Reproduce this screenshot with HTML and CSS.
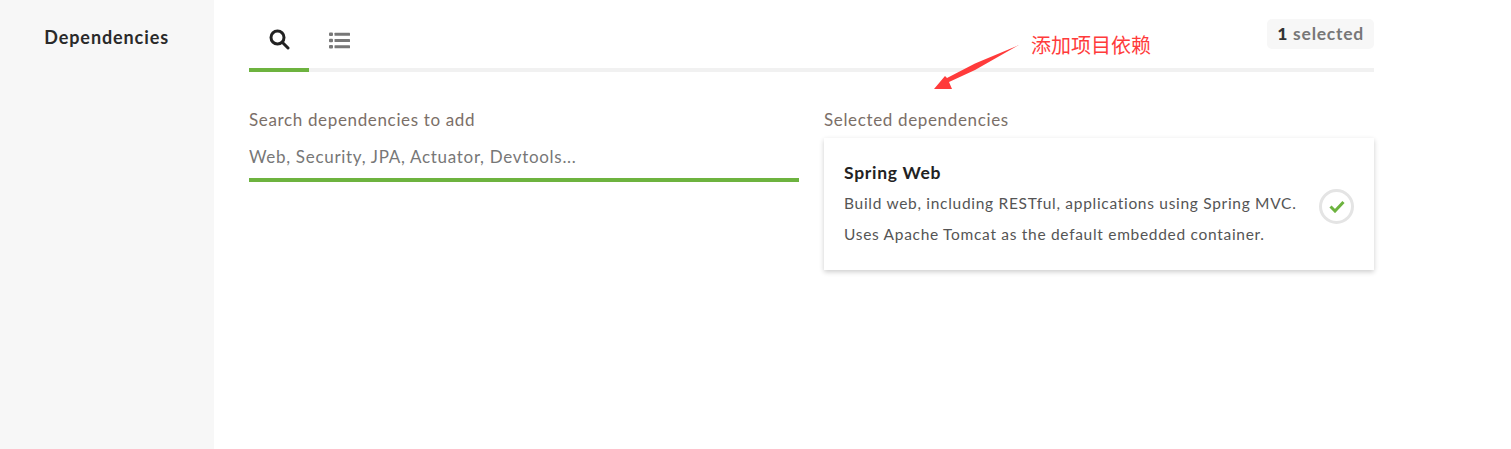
FILE: index.html
```html
<!DOCTYPE html>
<html lang="en">
<head>
  <meta charset="UTF-8">
  <title>Dependencies</title>
  <link rel="stylesheet" href="styles.css">
</head>
<body>
  <div class="page">
    <aside class="sidebar">
      <h2>Dependencies</h2>
    </aside>

    <main class="content">
      <!-- Tabs -->
      <div class="tabs">
        <div class="tab tab-active">
          <svg width="21" height="21" viewBox="0 0 21 21" fill="none" stroke="#222" stroke-width="3">
            <circle cx="8.5" cy="8.5" r="6.5"/>
            <path d="M13.5 13.5 L19 19" stroke-linecap="round"/>
          </svg>
        </div>
        <div class="tab tab-list">
          <svg width="21" height="17" viewBox="0 0 21 17" fill="#777">
            <rect x="0" y="0.5" width="4" height="3.5" rx="1"/>
            <rect x="0" y="6.7" width="4" height="3.5" rx="1"/>
            <rect x="0" y="13" width="4" height="3.5" rx="1"/>
            <rect x="5.5" y="0.7" width="15.5" height="3" rx="0.5"/>
            <rect x="5.5" y="7" width="15.5" height="3" rx="0.5"/>
            <rect x="5.5" y="13.2" width="15.5" height="3" rx="0.5"/>
          </svg>
        </div>
        <div class="selected-count"><strong>1</strong> selected</div>
      </div>

      <div class="columns">
        <!-- Search -->
        <section class="column">
          <label class="column-title">Search dependencies to add</label>
          <input class="search-input" type="text" placeholder="Web, Security, JPA, Actuator, Devtools...">
        </section>

        <!-- Selected -->
        <section class="column">
          <div class="column-title">Selected dependencies</div>
          <div class="dep-card">
            <div class="dep-text">
              <h3>Spring Web</h3>
              <p>Build web, including RESTful, applications using Spring MVC.</p>
              <p>Uses Apache Tomcat as the default embedded container.</p>
            </div>
            <div class="dep-check">
              <svg width="16" height="13" viewBox="0 0 16 13" fill="none" stroke="#6db33f" stroke-width="3">
                <path d="M1.5 6.5 L6 11 L14.5 2"/>
              </svg>
            </div>
          </div>
        </section>
      </div>
    </main>
  </div>

  <!-- Annotation drawn on top of the screenshot -->
  <svg class="note-arrow" width="90" height="50" viewBox="0 0 90 50">
    <polygon points="85,4 41,22.5 13,37 11,35 0,48 18,48 15,41 41,29" fill="#ff3b3b"/>
  </svg>
  <div class="note-text">添加项目依赖</div>
</body>
</html>
```

FILE: styles.css
```css
* {
  box-sizing: border-box;
}

html, body {
  margin: 0;
  padding: 0;
  height: 100%;
  overflow: hidden;
}

body {
  font-family: "Lato", "Open Sans", sans-serif;
  background-color: #fff;
  color: #333;
}

.page {
  display: flex;
  height: 449px;
}

.sidebar {
  width: 214px;
  flex-shrink: 0;
  background-color: #f7f7f7;
  padding: 26px 45px 0 0;
  text-align: right;
}

.sidebar h2 {
  margin: 0;
  font-size: 18px;
  line-height: 22px;
  font-weight: 700;
  letter-spacing: 0.9px;
  color: #2a2a2a;
}

.content {
  width: 1125px;
  margin-left: 35px;
}

.tabs {
  display: flex;
  height: 72px;
  border-bottom: 4px solid #f1f1f1;
  position: relative;
}

.tab {
  width: 60px;
  height: 72px;
  padding-top: 29px;
  display: flex;
  justify-content: center;
  align-items: flex-start;
}

.tab-list {
  padding-top: 32px;
}

.tab-active {
  border-bottom: 4px solid #6db33f;
}

.selected-count {
  margin: 19px 0 0 auto;
  height: 30px;
  padding: 0 10px;
  line-height: 30px;
  font-size: 17.5px;
  font-weight: 700;
  letter-spacing: 0.75px;
  color: #777;
  background-color: #f7f7f7;
  border-radius: 5px;
}

.selected-count strong {
  color: #333;
}

.columns {
  display: flex;
  gap: 25px;
  padding-top: 36px;
}

.column {
  width: 550px;
}

.column-title {
  display: block;
  height: 30px;
  font-size: 17px;
  line-height: 23px;
  letter-spacing: 0.65px;
  color: #7b6f68;
}

.search-input {
  display: block;
  width: 100%;
  height: 44px;
  padding: 0 0 4px;
  border: none;
  border-bottom: 4px solid #6db33f;
  outline: none;
  font-family: inherit;
  font-size: 17px;
  letter-spacing: 0.7px;
  color: #666;
}

.search-input::placeholder {
  color: #777;
  opacity: 1;
}

.dep-card {
  display: flex;
  justify-content: space-between;
  align-items: center;
  height: 132px;
  padding: 0 20px;
  background-color: #fff;
  box-shadow: 0 2px 5px rgba(0, 0, 0, 0.2);
}

.dep-text {
  margin-top: -2px;
}

.dep-text h3 {
  margin: 0 0 9px;
  font-size: 17.5px;
  line-height: 22px;
  font-weight: 700;
  letter-spacing: 0.7px;
  color: #222;
}

.dep-text p {
  margin: 0 0 11px;
  font-size: 15.5px;
  line-height: 20px;
  letter-spacing: 0.7px;
  color: #555;
}

.dep-text p:last-child {
  margin-bottom: 0;
}

.dep-check {
  width: 35px;
  height: 35px;
  margin-top: 5px;
  border: 3px solid #e4e4e4;
  border-radius: 50%;
  display: flex;
  justify-content: center;
  align-items: center;
}

.note-arrow {
  position: absolute;
  left: 934px;
  top: 41px;
}

.note-text {
  position: absolute;
  left: 1031px;
  top: 31px;
  font-family: "Noto Sans CJK SC", sans-serif;
  font-size: 20px;
  line-height: 28px;
  color: #ff3b3b;
}
```
